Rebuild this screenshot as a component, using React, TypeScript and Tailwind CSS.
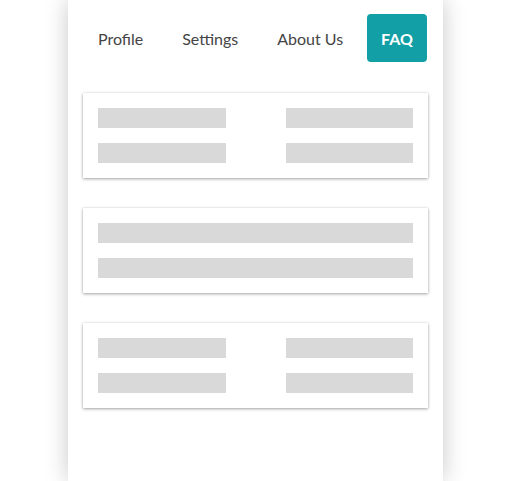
const tabs = ["Profile", "Settings", "About Us", "FAQ"]

function Bar({ className = "" }: { className?: string }) {
  return <div className={"h-5 bg-[#d9d9d9] " + className} />
}

function Card({ split }: { split?: boolean }) {
  return (
    <div className="bg-white p-[15px] shadow-[0_1px_3px_rgba(0,0,0,0.35),0_0_2px_rgba(0,0,0,0.08)] flex flex-col gap-[15px]">
      {split ? (
        <>
          <div className="grid grid-cols-2 gap-[60px]">
            <Bar />
            <Bar />
          </div>
          <div className="grid grid-cols-2 gap-[60px]">
            <Bar />
            <Bar />
          </div>
        </>
      ) : (
        <>
          <Bar />
          <Bar />
        </>
      )}
    </div>
  )
}

export default function App() {
  return (
    <div className="w-[507px] h-[481px] bg-white flex overflow-hidden font-['Lato',sans-serif]">
      <div className="ml-[68px] w-[375px] h-full bg-white shadow-[0_0_22px_rgba(0,0,0,0.22)] px-[15px] pt-[14px] flex flex-col">
        <nav className="flex items-center justify-between h-12 text-[16px] text-[#444]">
          {tabs.map((t) =>
            t === "FAQ" ? (
              <span key={t} className="h-12 w-[60px] flex items-center justify-center pt-[2px] rounded bg-[#129fa5] text-white font-bold mr-px">
                {t}
              </span>
            ) : (
              <span key={t} className="px-[15px] pt-[2px]">{t}</span>
            )
          )}
        </nav>
        <div className="mt-[31px] flex flex-col gap-[30px]">
          <Card split />
          <Card />
          <Card split />
        </div>
      </div>
    </div>
  )
}
